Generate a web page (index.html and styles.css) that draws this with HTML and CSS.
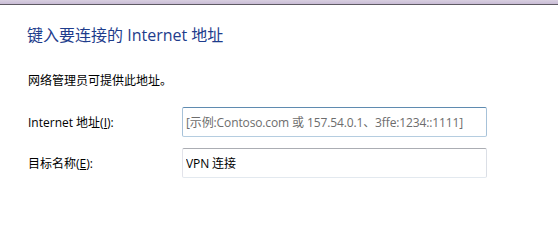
FILE: index.html
```html
<!DOCTYPE html>
<html lang="zh-CN">
<head>
<meta charset="utf-8">
<title>键入要连接的 Internet 地址</title>
<link rel="stylesheet" href="styles.css">
</head>
<body>
<div class="topbar"></div>
<main class="content">
  <h1 class="title">键入要连接的 Internet 地址</h1>
  <p class="note">网络管理员可提供此地址。</p>
  <div class="form">
    <label class="label" for="addr">Internet 地址(<u>I</u>):</label>
    <div class="field field-focus"><input id="addr" class="input" type="text" placeholder="[示例:Contoso.com 或 157.54.0.1、3ffe:1234::1111]"></div>
    <label class="label" for="name">目标名称(<u>E</u>):</label>
    <div class="field"><input id="name" class="input" type="text" value="VPN 连接"></div>
  </div>
</main>
</body>
</html>
```
FILE: styles.css
```css
html, body {
  margin: 0;
  padding: 0;
  background: #ffffff;
}
body {
  width: 558px;
  height: 205px;
  overflow: hidden;
  font-family: "Open Sans", "Noto Sans CJK SC", sans-serif;
  font-size: 12px;
  color: #000000;
}
.topbar {
  height: 4px;
  background: linear-gradient(to bottom, #d8cfe0, #c9bcd6);
  border-bottom: 1px solid #5e5a63;
}
.content {
  padding: 0 0 0 27px;
}
.title {
  margin: 19px 0 0 0;
  font-size: 16px;
  font-weight: normal;
  color: #1e3c8c;
  line-height: 22px;
}
.note {
  margin: 26px 0 0 1px;
  line-height: 17px;
}
.form {
  margin-top: 18px;
  display: grid;
  grid-template-columns: 155px 305px;
  row-gap: 11px;
  align-items: center;
}
.label {
  padding-left: 1px;
  line-height: 17px;
}
.label u {
  text-decoration: underline;
}
.field {
  height: 30px;
  box-sizing: border-box;
  border: 1px solid #abadb3;
  border-left-color: #e2e3ea;
  border-right-color: #dbdfe6;
  border-bottom-color: #e3e9ef;
  border-radius: 2px;
  display: flex;
  align-items: center;
}
.field-focus {
  border-color: #5f8bb0;
  border-left-color: #a7c2d9;
  border-right-color: #a7c2d9;
  border-bottom-color: #b5cde0;
}
.input {
  border: 0;
  outline: none;
  background: transparent;
  padding: 0 0 0 3px;
  margin: 0;
  width: 100%;
  font-family: "Open Sans", "Noto Sans CJK SC", sans-serif;
  font-size: 12px;
  letter-spacing: -0.12px;
  color: #000000;
}
.input::placeholder {
  color: #6d6d6d;
  opacity: 1;
}
```
